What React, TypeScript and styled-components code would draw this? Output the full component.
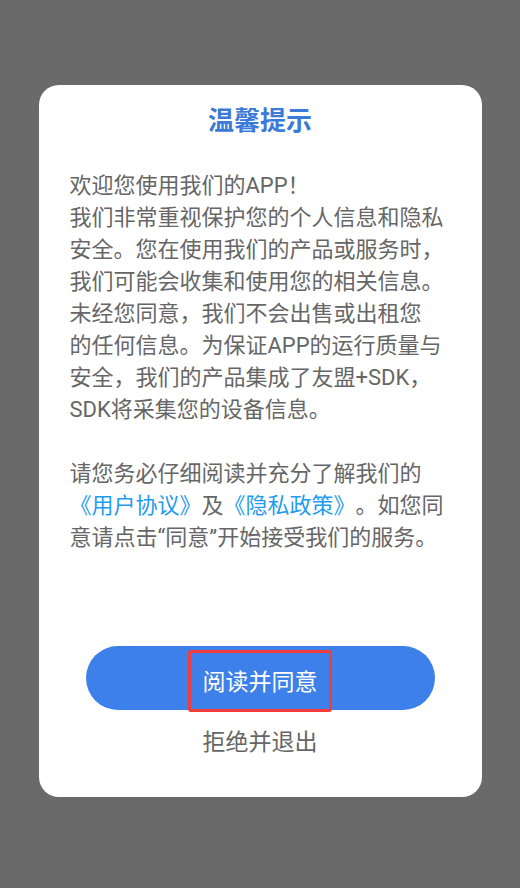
import React from "react";
import styled, { createGlobalStyle } from "styled-components";

const GlobalStyle = createGlobalStyle`
  html, body {
    margin: 0;
    padding: 0;
    background: #6a6a6a;
  }
  body {
    font-family: Roboto, "Noto Sans CJK SC", "Noto Sans", sans-serif;
    text-spacing-trim: space-all;
  }
`;

const Page = styled.div`
  min-height: 100vh;
  box-sizing: border-box;
  padding-top: 85px;
  display: flex;
  justify-content: center;
  align-items: flex-start;
`;

const Dialog = styled.div`
  width: 443px;
  box-sizing: border-box;
  background: #ffffff;
  border-radius: 20px;
  padding: 18px 31px 38px;
  display: flex;
  flex-direction: column;
`;

const Title = styled.div`
  text-align: center;
  color: #3c7ad9;
  font-size: 26px;
  font-weight: 700;
  line-height: 36px;
`;

const Body = styled.div`
  margin-top: 31px;
  color: #666666;
  font-size: 22px;
  line-height: 32px;
  white-space: nowrap;
`;

const Gap = styled.div`
  height: 32px;
`;

const Link = styled.span`
  color: #1f9cf0;
`;

const Actions = styled.div`
  margin-top: 92px;
  display: flex;
  flex-direction: column;
  align-items: center;
`;

const AgreeButton = styled.button`
  width: 349px;
  height: 64px;
  border: none;
  border-radius: 32px;
  background: #3e80ea;
  padding: 0;
  display: flex;
  justify-content: center;
  align-items: flex-start;
  cursor: pointer;
  font-family: inherit;
`;

// highlighted label (red outline)
const AgreeLabel = styled.span`
  margin-top: 4px;
  width: 144px;
  height: 62px;
  box-sizing: border-box;
  border: 3px solid #f23b3b;
  border-radius: 3px;
  display: flex;
  justify-content: center;
  align-items: center;
  color: #ffffff;
  font-size: 23px;
  padding-bottom: 2px;
`;

const DeclineButton = styled.button`
  margin-top: 17px;
  border: none;
  background: none;
  padding: 0;
  color: #666666;
  font-family: inherit;
  font-size: 23px;
  line-height: 32px;
  cursor: pointer;
`;

const lines = [
  "欢迎您使用我们的APP！",
  "我们非常重视保护您的个人信息和隐私",
  "安全。您在使用我们的产品或服务时，",
  "我们可能会收集和使用您的相关信息。",
  "未经您同意，我们不会出售或出租您",
  "的任何信息。为保证APP的运行质量与",
  "安全，我们的产品集成了友盟+SDK，",
  "SDK将采集您的设备信息。",
];

const App: React.FC = () => {
  return (
    <>
      <GlobalStyle />
      <Page>
        <Dialog>
          <Title>温馨提示</Title>
          <Body>
            {lines.map((l) => (
              <div key={l}>{l}</div>
            ))}
            <Gap />
            <div>请您务必仔细阅读并充分了解我们的</div>
            <div>
              <Link>《用户协议》</Link>及<Link>《隐私政策》</Link>。如您同
            </div>
            <div>意请点击“同意”开始接受我们的服务。</div>
          </Body>
          <Actions>
            <AgreeButton>
              <AgreeLabel>阅读并同意</AgreeLabel>
            </AgreeButton>
            <DeclineButton>拒绝并退出</DeclineButton>
          </Actions>
        </Dialog>
      </Page>
    </>
  );
};

export default App;
